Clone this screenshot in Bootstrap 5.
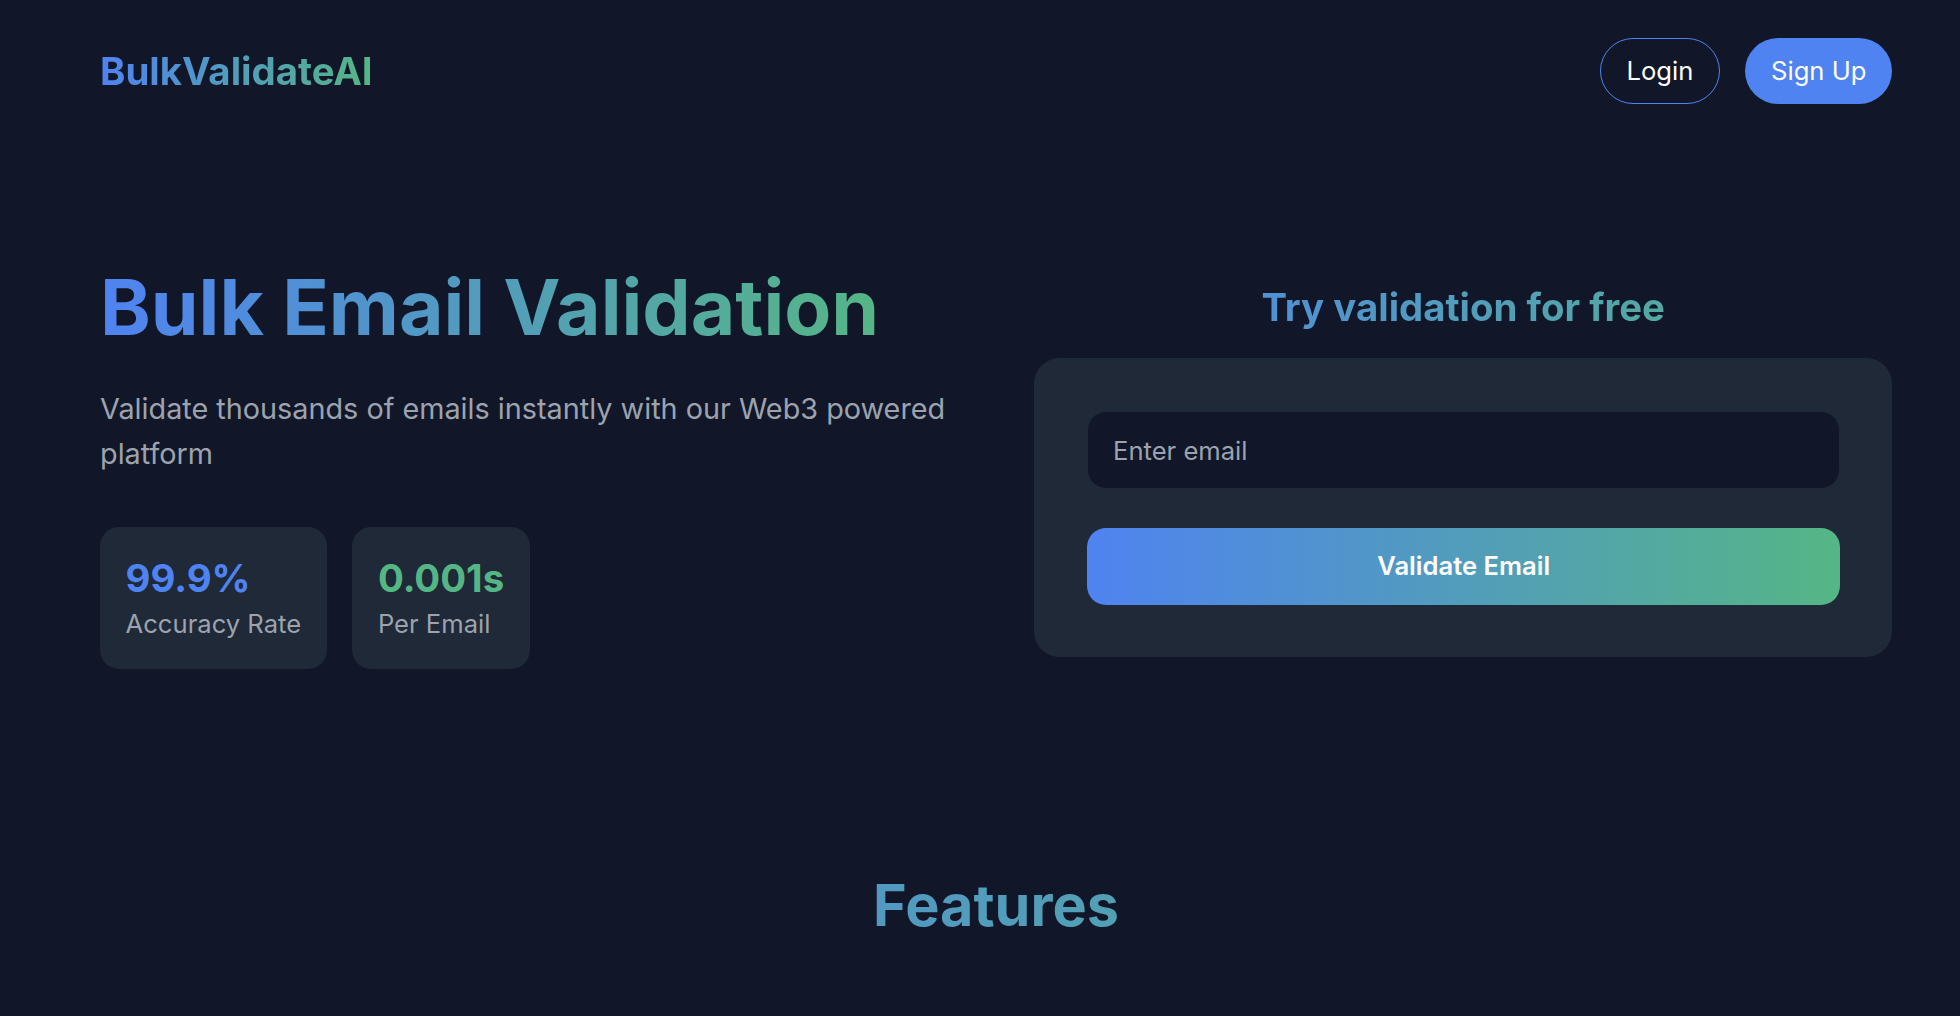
<!DOCTYPE html>
<html lang="en">
<head>
  <meta charset="UTF-8">
  <title>BulkValidateAI</title>
  <link href="https://cdn.jsdelivr.net/npm/bootstrap@5.3.3/dist/css/bootstrap.min.css" rel="stylesheet">
  <style>
    body {
      background: #111729;
      font-family: Inter, "Liberation Sans", sans-serif;
      color: #fff;
    }
    .page-wrap { padding: 0 68px 0 100px; }
    .grad-text {
      background: linear-gradient(90deg, #4f83f1, #55b685);
      -webkit-background-clip: text;
      background-clip: text;
      color: transparent;
    }
    .top-bar { padding-top: 38px; }
    .brand-name { font-size: 38.4px; font-weight: 700; line-height: 66px; width: fit-content; }
    .pill-btn {
      height: 66px;
      padding: 0 25.6px;
      font-size: 25.6px;
      font-weight: 400;
      border-radius: 33px;
      color: #fff;
      border: 1px solid #4f83f1;
    }
    .pill-btn:hover { color: #fff; }
    .pill-solid, .pill-solid:hover { background: #4f83f1; border: 0; }
    .btn-row { gap: 25.6px; }
    .hero-row { margin-top: 156px; column-gap: 76.8px; }
    .hero-left, .hero-right { flex: 1 1 0; min-width: 0; }
    .hero-right { padding-top: 24px; }
    .hero-title { font-size: 76.8px; font-weight: 700; line-height: 96px; margin: 0 0 30px; width: fit-content; }
    .hero-sub { font-size: 28.8px; line-height: 45px; color: #9ca3af; margin: 0 0 51px; }
    .stat-box { background: #1f2937; border-radius: 19.2px; padding: 25.6px; }
    .stat-val { font-size: 38.4px; font-weight: 700; line-height: 50px; margin-bottom: 2px; }
    .stat-lbl { font-size: 25.6px; line-height: 38.4px; color: #9ca3af; }
    .val-blue { color: #4f83f1; }
    .val-green { color: #55b685; }
    .try-title { font-size: 38.4px; font-weight: 700; line-height: 46px; margin: 0 0 28px; text-align: center; }
    .try-card { background: #1f2937; border-radius: 25.6px; padding: 53px 52px 52px 53px; }
    .email-box, .email-box:focus {
      background: #111729;
      border: 1px solid #1f2937;
      border-radius: 19.2px;
      height: 78px;
      padding: 0 24.6px;
      font-size: 25.6px;
      color: #fff;
      box-shadow: none;
    }
    .email-box::placeholder { color: #9ca3af; opacity: 1; }
    .go-btn, .go-btn:hover {
      background: linear-gradient(90deg, #4f83f1, #55b685);
      color: #fff;
      border: 0;
      border-radius: 19.2px;
      height: 77px;
      margin-top: 39px;
      font-size: 25.6px;
      font-weight: 600;
    }
    .feat-title { font-size: 57.6px; font-weight: 700; line-height: 68px; margin: 0; text-align: center; }
    .feat-wrap { margin-top: 202px; }
  </style>
</head>
<body>
<div class="page-wrap">
  <nav class="top-bar d-flex justify-content-between align-items-center">
    <div class="brand-name grad-text">BulkValidateAI</div>
    <div class="d-flex btn-row">
      <a href="#" class="btn pill-btn d-flex align-items-center">Login</a>
      <a href="#" class="btn pill-btn pill-solid d-flex align-items-center">Sign Up</a>
    </div>
  </nav>

  <section class="hero-row d-flex align-items-start">
    <div class="hero-left">
      <h1 class="hero-title grad-text">Bulk Email Validation</h1>
      <p class="hero-sub">Validate thousands of emails instantly with our Web3 powered platform</p>
      <div class="d-flex btn-row">
        <div class="stat-box">
          <div class="stat-val val-blue">99.9%</div>
          <div class="stat-lbl">Accuracy Rate</div>
        </div>
        <div class="stat-box">
          <div class="stat-val val-green">0.001s</div>
          <div class="stat-lbl">Per Email</div>
        </div>
      </div>
    </div>
    <div class="hero-right">
      <h2 class="try-title grad-text">Try validation for free</h2>
      <form class="try-card d-flex flex-column">
        <input type="email" class="form-control email-box" placeholder="Enter email">
        <button type="button" class="btn go-btn">Validate Email</button>
      </form>
    </div>
  </section>

  <section class="feat-wrap">
    <h2 class="feat-title grad-text">Features</h2>
  </section>
</div>
<script src="https://cdn.jsdelivr.net/npm/bootstrap@5.3.3/dist/js/bootstrap.bundle.min.js"></script>
</body>
</html>
